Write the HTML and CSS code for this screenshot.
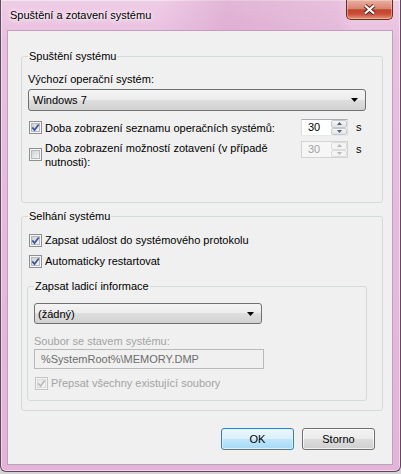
FILE: index.html
```html
<!DOCTYPE html>
<html lang="cs">
<head>
    <meta charset="UTF-8">
    <title>Spuštění a zotavení systému</title>
    <link rel="stylesheet" href="styles.css">
</head>
<body>
    <svg class="defs" width="0" height="0">
        <defs>
            <linearGradient id="cbfill" x1="0" y1="0" x2="1" y2="1">
                <stop offset="0" stop-color="#cbcfd5"/>
                <stop offset="1" stop-color="#f7f7f7"/>
            </linearGradient>
            <linearGradient id="cbfill-dis" x1="0" y1="0" x2="1" y2="1">
                <stop offset="0" stop-color="#e6e6e6"/>
                <stop offset="1" stop-color="#f7f7f7"/>
            </linearGradient>
        </defs>
        <symbol id="cb-on" viewBox="0 0 13 13">
            <rect x=".5" y=".5" width="12" height="12" fill="#f6f6f6" stroke="#8e8f8f"/>
            <rect x="2.5" y="2.5" width="8" height="8" fill="url(#cbfill)" stroke="#b4b9c0"/>
            <path d="M3.3 6.4 5.5 9.1 9.7 3.5" fill="none" stroke="#3f5591" stroke-width="1.7"/>
        </symbol>
        <symbol id="cb-off" viewBox="0 0 13 13">
            <rect x=".5" y=".5" width="12" height="12" fill="#f6f6f6" stroke="#8e8f8f"/>
            <rect x="2.5" y="2.5" width="8" height="8" fill="url(#cbfill)" stroke="#b4b9c0"/>
        </symbol>
        <symbol id="cb-dis" viewBox="0 0 13 13">
            <rect x=".5" y=".5" width="12" height="12" fill="#f4f4f4" stroke="#c4c4c4"/>
            <rect x="2.5" y="2.5" width="8" height="8" fill="url(#cbfill-dis)" stroke="#dadada"/>
            <path d="M3.3 6.4 5.5 9.1 9.7 3.5" fill="none" stroke="#b3b3b3" stroke-width="1.5"/>
        </symbol>
    </svg>

    <div class="window">
        <div class="titlebar">
            <span class="title">Spuštění a zotavení systému</span>
            <span class="close">
                <svg width="13" height="11" viewBox="0 0 13 11">
                    <path d="M2 1.5 11 9.5M11 1.5 2 9.5" stroke="#5a1f18" stroke-width="4"/>
                    <path d="M2 1.5 11 9.5M11 1.5 2 9.5" stroke="#fff" stroke-width="2.2"/>
                </svg>
            </span>
        </div>

        <div class="client">
            <fieldset class="group">
                <legend>Spuštění systému</legend>
                <div class="label">Výchozí operační systém:</div>
                <div class="combo os-combo">
                    <span>Windows 7</span>
                    <svg class="arrow" width="7" height="4"><path d="M0 0h7L3.5 4z"/></svg>
                </div>

                <div class="opt-row first">
                    <div class="opt-label">
                        <svg class="cb"><use href="#cb-on"/></svg>
                        <span>Doba zobrazení seznamu operačních systémů:</span>
                    </div>
                    <div class="spin">
                        <span class="spin-val">30</span>
                        <span class="spin-btns">
                            <span class="spin-btn"><svg width="5" height="3"><path d="M0 3h5L2.5 0z"/></svg></span>
                            <span class="spin-btn"><svg width="5" height="3"><path d="M0 0h5L2.5 3z"/></svg></span>
                        </span>
                    </div>
                    <span class="unit">s</span>
                </div>

                <div class="opt-row second">
                    <div class="opt-label">
                        <svg class="cb"><use href="#cb-off"/></svg>
                        <span class="two-lines">Doba zobrazení možností zotavení (v případě<br>nutnosti):</span>
                    </div>
                    <div class="spin disabled">
                        <span class="spin-val">30</span>
                        <span class="spin-btns">
                            <span class="spin-btn"><svg width="5" height="3"><path d="M0 3h5L2.5 0z"/></svg></span>
                            <span class="spin-btn"><svg width="5" height="3"><path d="M0 0h5L2.5 3z"/></svg></span>
                        </span>
                    </div>
                    <span class="unit">s</span>
                </div>
            </fieldset>

            <fieldset class="group failure">
                <legend>Selhání systému</legend>
                <div class="check-row">
                    <svg class="cb"><use href="#cb-on"/></svg>
                    <span>Zapsat událost do systémového protokolu</span>
                </div>
                <div class="check-row">
                    <svg class="cb"><use href="#cb-on"/></svg>
                    <span>Automaticky restartovat</span>
                </div>

                <fieldset class="group debug">
                    <legend>Zapsat ladicí informace</legend>
                    <div class="combo dump-combo">
                        <span>(žádný)</span>
                        <svg class="arrow" width="7" height="4"><path d="M0 0h7L3.5 4z"/></svg>
                    </div>
                    <div class="label dim">Soubor se stavem systému:</div>
                    <div class="field">%SystemRoot%\MEMORY.DMP</div>
                    <div class="check-row dim">
                        <svg class="cb"><use href="#cb-dis"/></svg>
                        <span>Přepsat všechny existující soubory</span>
                    </div>
                </fieldset>
            </fieldset>

            <div class="buttons">
                <button class="btn default">OK</button>
                <button class="btn">Storno</button>
            </div>
        </div>
    </div>
</body>
</html>
```

FILE: styles.css
```css
body {
    margin: 0;
    width: 401px;
    height: 474px;
    overflow: hidden;
    background: #d6d3d6;
    font-family: "Liberation Sans", Arial, sans-serif;
    font-size: 11px;
    color: #000;
}

.defs {
    position: absolute;
    width: 0;
    height: 0;
}

.window {
    box-sizing: border-box;
    width: 401px;
    height: 472px;
    padding: 0 7px 6px 6px;
    border: 1px solid #5e4a5a;
    border-top: none;
    border-radius: 0 0 6px 6px;
    background: linear-gradient(to bottom, #efcde6 0, #e9bfe0 40px, #e4b3d9 100%);
    box-shadow: inset 0 0 0 1px rgba(255, 255, 255, 0.45);
}

.titlebar {
    display: flex;
    justify-content: space-between;
    align-items: center;
    height: 30px;
    background: linear-gradient(to right, transparent 150px, rgba(200, 140, 185, 0.35) 220px, rgba(215, 165, 200, 0.3) 330px, transparent 345px);
}

.title {
    padding-left: 3px;
    text-shadow: 0 0 6px #fff, 0 0 4px #fff;
}

.close {
    align-self: flex-start;
    display: flex;
    justify-content: center;
    align-items: center;
    box-sizing: border-box;
    width: 47px;
    height: 20px;
    border: 1px solid #6b2a22;
    border-top: none;
    border-radius: 0 0 5px 5px;
    background: linear-gradient(to bottom, #eab0a2 0, #dc8470 45%, #c4432b 52%, #c9513a 75%, #e09580 100%);
    box-shadow: inset 0 0 0 1px rgba(255, 220, 210, 0.45);
}

.client {
    box-sizing: border-box;
    height: 435px;
    padding: 18px 9px 0 13px;
    border: 1px solid #b9a3b4;
    background: #f0f0f0;
}

.group {
    margin: 0;
    padding: 8px 6px 33px;
    border: 1px solid #d5dadd;
    border-radius: 3px;
    min-width: 0;
}

.group legend {
    padding: 0 1px;
    line-height: 15px;
}

.failure {
    margin-top: 6px;
    padding: 9px 6px 9px;
}

.debug {
    width: 340px;
    box-sizing: border-box;
    margin: 10px 0 0 -1px;
    padding: 9px 6px 9px;
}

.label {
    line-height: 15px;
}

.label.dim {
    margin-top: 11px;
    line-height: 13px;
}

.dim {
    color: #a3a3a3;
}

.combo {
    display: flex;
    justify-content: space-between;
    align-items: center;
    box-sizing: border-box;
    height: 22px;
    border: 1px solid #707070;
    border-radius: 3px;
    background: linear-gradient(to bottom, #f4f4f4 0, #ececec 50%, #dedede 50%, #d2d2d2 100%);
    padding: 0 7px 0 4px;
}

.os-combo {
    margin-top: 2px;
    width: 338px;
}

.dump-combo {
    height: 21px;
    width: 228px;
    padding-left: 3px;
}

.arrow path {
    fill: #000;
}

.opt-row {
    display: flex;
}

.opt-row.first {
    margin-top: 8px;
    align-items: center;
    height: 17px;
}

.opt-row.second {
    margin-top: 5px;
    align-items: flex-start;
}

.opt-label {
    display: flex;
    align-items: center;
    width: 273px;
}

.second .opt-label {
    align-items: flex-start;
}

.second .cb {
    margin-top: 7px;
}

.two-lines {
    line-height: 14px;
}

.cb {
    flex: none;
    width: 13px;
    height: 13px;
    margin: 0 3px 0 1px;
}

.spin {
    display: flex;
    box-sizing: border-box;
    width: 47px;
    height: 17px;
    border: 1px solid #abadb3;
    border-left-color: #dbdde3;
    border-right-color: #dbdde3;
    border-bottom-color: #e3e9ef;
    background: #fff;
}

.spin-val {
    flex: 1;
    padding-left: 6px;
    line-height: 15px;
}

.spin-btns {
    display: flex;
    flex-direction: column;
    width: 16px;
}

.spin-btn {
    flex: 1;
    display: flex;
    justify-content: center;
    align-items: center;
    border: 1px solid #c6c9cf;
    border-radius: 2px;
    background: linear-gradient(to bottom, #f6f6f6, #e2e2e2);
}

.spin-btn path {
    fill: #4c607a;
}

.spin.disabled {
    border-color: #d3d3d3;
    background: #f6f6f6;
    color: #a3a3a3;
}

.spin.disabled .spin-btn {
    border-color: #dcdcdc;
    background: #f4f4f4;
}

.spin.disabled .spin-btn path {
    fill: #b8b8b8;
}

.unit {
    margin-left: 8px;
    line-height: 17px;
}

.check-row {
    display: flex;
    align-items: center;
    line-height: 15px;
}

.check-row + .check-row {
    margin-top: 6px;
}

.debug .check-row {
    margin-top: 7px;
}

.field {
    box-sizing: border-box;
    width: 230px;
    height: 20px;
    margin-top: 1px;
    padding-left: 6px;
    border: 1px solid #b9b9b9;
    line-height: 18px;
    color: #6d6d6d;
}

.buttons {
    display: flex;
    justify-content: flex-end;
    gap: 8px;
    margin: 17px 8px 0 0;
}

.btn {
    box-sizing: border-box;
    width: 73px;
    height: 22px;
    padding: 0;
    border: 1px solid #707070;
    border-radius: 3px;
    background: linear-gradient(to bottom, #f2f2f2 0, #ebebeb 50%, #dddddd 50%, #cfcfcf 100%);
    box-shadow: inset 0 0 0 1px rgba(255, 255, 255, 0.7);
    font-family: inherit;
    font-size: 11px;
    color: #000;
}

.btn.default {
    border-color: #3c7fb1;
    background: linear-gradient(to bottom, #eaf6fd 0, #d9f0fc 50%, #bee6fd 50%, #a7d9f5 100%);
    box-shadow: inset 0 0 0 1px rgba(220, 245, 255, 0.9);
}
```
